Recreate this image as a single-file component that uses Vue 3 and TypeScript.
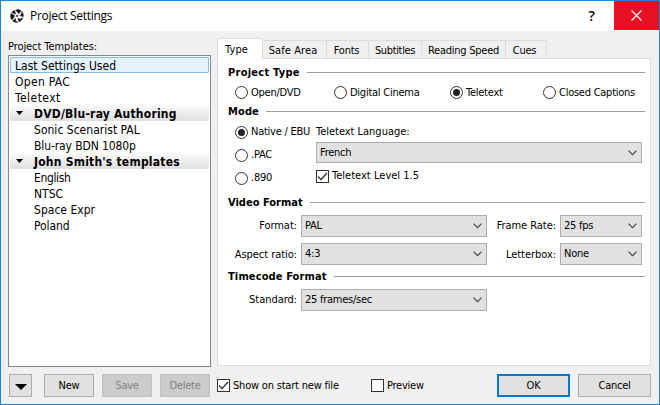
<script setup lang="ts">
import { ref } from 'vue'

interface TreeRow {
  label: string
  kind: 'item' | 'group' | 'child'
  track?: string
}

const rows: TreeRow[] = [
  { label: 'Last Settings Used', kind: 'item' },
  { label: 'Open PAC', kind: 'item', track: 'wide' },
  { label: 'Teletext', kind: 'item', track: 'wider' },
  { label: 'DVD/Blu-ray Authoring', kind: 'group' },
  { label: 'Sonic Scenarist PAL', kind: 'child' },
  { label: 'Blu-ray BDN 1080p', kind: 'child', track: 'normal' },
  { label: "John Smith's templates", kind: 'group' },
  { label: 'English', kind: 'child', track: 'tight' },
  { label: 'NTSC', kind: 'child' },
  { label: 'Space Expr', kind: 'child' },
  { label: 'Poland', kind: 'child', track: 'normal' },
]
const selected = ref(0)

const tabs = [
  { label: 'Type', cls: 't-type' },
  { label: 'Safe Area', cls: 't-safe' },
  { label: 'Fonts', cls: 't-fonts' },
  { label: 'Subtitles', cls: 't-subs' },
  { label: 'Reading Speed', cls: 't-speed' },
  { label: 'Cues', cls: 't-cues' },
]
const activeTab = ref(0)

const projectTypes = ['Open/DVD', 'Digital Cinema', 'Teletext', 'Closed Captions']
const projectType = ref('Teletext')
const modes = ['Native / EBU', '.PAC', '.890']
const mode = ref('Native / EBU')
const level15 = ref(true)
const showOnStart = ref(true)
const preview = ref(false)
</script>

<template>
  <div class="window">
    <header class="titlebar">
      <svg class="logo" width="14" height="14" viewBox="0 0 14 14">
        <g fill="#111" stroke="#111" stroke-width=".4" stroke-linejoin="round">
          <path d="M5.500 1.200 Q8.500 -.2 11 1.600 L9 4.800 L7.200 2.800 Z" />
          <path d="M11.600 2.200 Q13.800 4.300 13.300 7.600 L10 6.800 L11.600 5 Z" />
          <path d="M12.900 8.600 Q12 12 9 13 L7.800 9.300 L10.300 10 Z" />
          <path d="M8 13.300 Q4.500 13.900 2.500 11.800 L5.600 9.500 L5.700 12 Z" />
          <path d="M1.500 10.700 Q-.3 7.300 1 4.500 L4.600 6.600 L3.600 9.300 Z" />
          <path d="M1.700 3.500 Q2.700 2 4.500 1.400 L5.800 5 L3.800 4.600 Z" />
          <path d="M6.300 6.200 L7.600 5.900 L7.900 7.400 L6.600 7.800 Z" />
        </g>
      </svg>
      <span class="title">Project Settings</span>
      <span class="help">?</span>
      <button class="close" aria-label="Close">
        <svg width="11" height="11" viewBox="0 0 11 11"><path d="M.5.5l10 10M10.500.5l-10 10" stroke="#fff" stroke-width="1.100" /></svg>
      </button>
    </header>

    <main class="body">
      <section class="left">
        <div class="caption">Project Templates:</div>
        <ul class="tree">
          <li
            v-for="(row, i) in rows"
            :key="row.label"
            :class="[row.kind, row.track, { selected: i === selected }]"
            @click="selected = i"
          >
            <svg v-if="row.kind === 'group'" class="tri" width="7" height="4" viewBox="0 0 7 4"><path d="M0 0h7L3.500 4z" /></svg>
            <span>{{ row.label }}</span>
          </li>
        </ul>
      </section>

      <section class="right">
        <nav class="tabs">
          <button
            v-for="(tab, i) in tabs"
            :key="tab.label"
            :class="['tab', tab.cls, { active: i === activeTab }]"
            @click="activeTab = i"
          ><span>{{ tab.label }}</span></button>
        </nav>
        <div class="panel">
          <div class="heading h-type"><b>Project Type</b><i /></div>
          <div class="types">
            <label v-for="t in projectTypes" :key="t" class="opt" @click="projectType = t">
              <span :class="['radio', { on: projectType === t }]" /><span>{{ t }}</span>
            </label>
          </div>

          <div class="heading h-mode"><b>Mode</b><i /></div>
          <div class="mode">
            <div class="modes">
              <label v-for="m in modes" :key="m" class="opt" @click="mode = m">
                <span :class="['radio', { on: mode === m }]" /><span>{{ m }}</span>
              </label>
            </div>
            <div class="lang">
              <div class="lang-label">Teletext Language:</div>
              <div class="select short"><span>French</span><svg width="9" height="6" viewBox="0 0 9 6"><path d="M.5.7l4 4 4-4" /></svg></div>
              <label class="check-row" @click="level15 = !level15">
                <span class="check"><svg v-if="level15" width="11" height="11" viewBox="0 0 11 11"><path d="M1 5.500l3 3L10 2" /></svg></span>
                <span class="level-text">Teletext Level 1.5</span>
              </label>
            </div>
          </div>

          <div class="heading h-video"><b>Video Format</b><i /></div>
          <div class="grid">
            <span class="lbl">Format:</span>
            <div class="select"><span>PAL</span><svg width="9" height="6" viewBox="0 0 9 6"><path d="M.5.7l4 4 4-4" /></svg></div>
            <span class="lbl">Frame Rate:</span>
            <div class="select"><span>25 fps</span><svg width="9" height="6" viewBox="0 0 9 6"><path d="M.5.7l4 4 4-4" /></svg></div>
            <span class="lbl low">Aspect ratio:</span>
            <div class="select"><span>4:3</span><svg width="9" height="6" viewBox="0 0 9 6"><path d="M.5.7l4 4 4-4" /></svg></div>
            <span class="lbl low">Letterbox:</span>
            <div class="select"><span>None</span><svg width="9" height="6" viewBox="0 0 9 6"><path d="M.5.7l4 4 4-4" /></svg></div>
          </div>

          <div class="heading h-time"><b>Timecode Format</b><i /></div>
          <div class="grid">
            <span class="lbl">Standard:</span>
            <div class="select"><span>25 frames/sec</span><svg width="9" height="6" viewBox="0 0 9 6"><path d="M.5.7l4 4 4-4" /></svg></div>
          </div>
        </div>
      </section>
    </main>

    <footer class="footer">
      <button class="btn drop" aria-label="Menu"><svg width="12" height="6" viewBox="0 0 12 6"><path d="M0 0h12L6 6z" /></svg></button>
      <button class="btn">New</button>
      <button class="btn disabled" disabled>Save</button>
      <button class="btn disabled" disabled>Delete</button>
      <label class="check-row start" @click="showOnStart = !showOnStart">
        <span class="check"><svg v-if="showOnStart" width="11" height="11" viewBox="0 0 11 11"><path d="M1 5.500l3 3L10 2" /></svg></span>
        <span class="start-text">Show on start new file</span>
      </label>
      <label class="check-row preview" @click="preview = !preview">
        <span class="check"><svg v-if="preview" width="11" height="11" viewBox="0 0 11 11"><path d="M1 5.500l3 3L10 2" /></svg></span>
        <span>Preview</span>
      </label>
      <button class="btn ok">OK</button>
      <button class="btn cancel">Cancel</button>
    </footer>
  </div>
</template>

<style>
body {
  margin: 0;
  overflow: hidden;
}
</style>

<style scoped>
* {
  box-sizing: border-box;
}
.window {
  width: 660px;
  height: 405px;
  border: 1px solid #1883d7;
  background: #f0f0f0;
  color: #000;
  font-family: 'DejaVu Sans Condensed', 'DejaVu Sans', sans-serif;
  font-stretch: condensed;
  font-size: 11px;
  letter-spacing: -0.25px;
  line-height: 14px;
  white-space: nowrap;
  display: flex;
  flex-direction: column;
}
button {
  font: inherit;
  letter-spacing: inherit;
  color: inherit;
  margin: 0;
  padding: 0;
  border: 0;
}
.titlebar {
  height: 30px;
  flex: none;
  background: #fff;
  display: flex;
  align-items: center;
  padding-left: 9px;
}
.logo {
  margin-right: 6px;
}
.title {
  flex: 1;
  font-family: 'Open Sans', sans-serif;
  font-stretch: normal;
  font-size: 12px;
  letter-spacing: -0.28px;
}
.help {
  width: 45px;
  text-align: center;
  font-family: 'Open Sans', sans-serif;
  font-stretch: normal;
  font-size: 14px;
  font-weight: 600;
}
.close {
  width: 45px;
  height: 29px;
  align-self: flex-start;
  background: #e81123;
  display: flex;
  align-items: center;
  justify-content: center;
}
.body {
  flex: none;
  height: 336px;
  display: flex;
  padding: 0 8px 0 7px;
}
.left {
  width: 203px;
  padding-top: 9px;
}
.caption {
  height: 15px;
  letter-spacing: -0.08px;
}
.tree {
  list-style: none;
  margin: 0;
  height: 312px;
  border: 1px solid #828790;
  background: #fff;
  padding: 1px;
  font-size: 12px;
  letter-spacing: 0.02px;
}
.tree li {
  height: 16px;
  line-height: 14px;
  display: flex;
  align-items: center;
  padding-left: 5px;
}
.tree span {
  padding-top: 2px;
}
.tree .child {
  padding-left: 24px;
}
.tree .group {
  padding-left: 6px;
  font-weight: bold;
  letter-spacing: 0.22px;
  background: linear-gradient(#fcfcfc, #dedede);
  border-radius: 2px;
}
.tree .wide {
  letter-spacing: 0.3px;
}
.tree .wider {
  letter-spacing: 0.45px;
}
.tree .normal {
  letter-spacing: -0.1px;
}
.tree .tight {
  letter-spacing: -0.35px;
}
.tree .selected {
  padding-left: 4px;
  background: #e5f1fb;
  border: 1px solid #84bdea;
  border-radius: 1px;
}
.tri {
  margin-right: 11px;
}
.right {
  width: 434px;
  margin-left: 6px;
  padding-top: 7px;
}
.tabs {
  display: flex;
  align-items: flex-end;
  height: 21px;
  margin-bottom: -1px;
  position: relative;
}
.tab {
  height: 19px;
  padding-top: 3px;
  background: #f0f0f0;
  border: 1px solid #dcdcdc;
  border-left: 0;
}
.tab.active {
  height: 21px;
  padding-top: 1px;
  padding-right: 7px;
  background: #fff;
  border-left: 1px solid #dcdcdc;
  border-bottom: 0;
}
.t-type {
  width: 46px;
  letter-spacing: 0.1px;
}
.t-safe {
  width: 64px;
  padding-right: 3px;
  letter-spacing: 0.1px;
}
.t-fonts {
  width: 42px;
  padding-right: 2px;
}
.t-subs {
  width: 53px;
  letter-spacing: -0.35px;
}
.t-speed {
  width: 84px;
}
.t-cues {
  width: 41px;
  padding-right: 3px;
}
.panel {
  height: 308px;
  background: #fff;
  border: 1px solid #dcdcdc;
  padding: 7px 5px 0 10px;
}
.heading {
  height: 14px;
  display: flex;
  align-items: center;
  gap: 7px;
  letter-spacing: 0.12px;
}
.h-type {
  letter-spacing: 0.25px;
}
.h-video {
  letter-spacing: 0;
}
.heading i {
  flex: 1;
  height: 1px;
  background: #a0a0a0;
  margin-bottom: 1px;
}
.types {
  height: 25px;
  padding-left: 7px;
  display: grid;
  grid-template-columns: 99px 116px 93px auto;
  align-items: center;
}
.opt {
  display: flex;
  align-items: center;
  gap: 3px;
}
.radio {
  width: 13px;
  height: 13px;
  border: 1px solid #333;
  border-radius: 50%;
  background: #fff;
  display: grid;
  place-items: center;
}
.radio.on::after {
  content: '';
  width: 7px;
  height: 7px;
  border-radius: 50%;
  background: #222;
}
.mode {
  display: flex;
  height: 77px;
}
.modes {
  width: 88px;
  padding: 6px 0 0 7px;
  display: flex;
  flex-direction: column;
  gap: 9px;
}
.lang {
  width: 326px;
  padding-top: 6px;
}
.lang-label {
  height: 17px;
  letter-spacing: -0.02px;
}
.select {
  height: 22px;
  border: 1px solid #adadad;
  background: #e1e1e1;
  padding: 0 4px 0 3px;
  display: flex;
  align-items: center;
  justify-content: space-between;
}
.select.short {
  height: 21px;
}
.select svg {
  fill: none;
  stroke: #444;
  stroke-width: 1.2;
}
.check-row {
  display: flex;
  align-items: center;
  gap: 3px;
}
.lang .check-row {
  margin-top: 6px;
}
.level-text {
  letter-spacing: 0.02px;
}
.start-text {
  letter-spacing: -0.2px;
}
.check {
  width: 13px;
  height: 13px;
  border: 1px solid #333;
  background: #fff;
  display: flex;
}
.check svg {
  fill: none;
  stroke: #333;
  stroke-width: 1.3;
}
.grid {
  display: grid;
  grid-template-columns: 69px 186px 65px 82px;
  column-gap: 4px;
  row-gap: 6px;
  padding-top: 5px;
  align-items: center;
}
.lbl {
  text-align: right;
  letter-spacing: -0.05px;
}
.low {
  padding-top: 2px;
}
.h-time {
  margin-top: 5px;
}
.footer {
  flex: none;
  height: 37px;
  display: flex;
  align-items: flex-start;
  padding: 7px 0 0 8px;
}
.btn {
  width: 50px;
  height: 23px;
  background: #e1e1e1;
  border: 1px solid #adadad;
  margin-right: 8px;
}
.drop {
  width: 23px;
  margin-right: 12px;
  display: flex;
  align-items: center;
  justify-content: center;
  padding-top: 2px;
}
.disabled {
  background: #ccc;
  border-color: #bfbfbf;
  color: #838383;
}
.start,
.preview {
  height: 23px;
}
.start {
  width: 154px;
  margin-left: -1px;
}
.preview {
  width: 126px;
}
.ok {
  width: 73px;
  border: 2px solid #0078d7;
}
.cancel {
  width: 73px;
  margin-right: 0;
}
</style>
